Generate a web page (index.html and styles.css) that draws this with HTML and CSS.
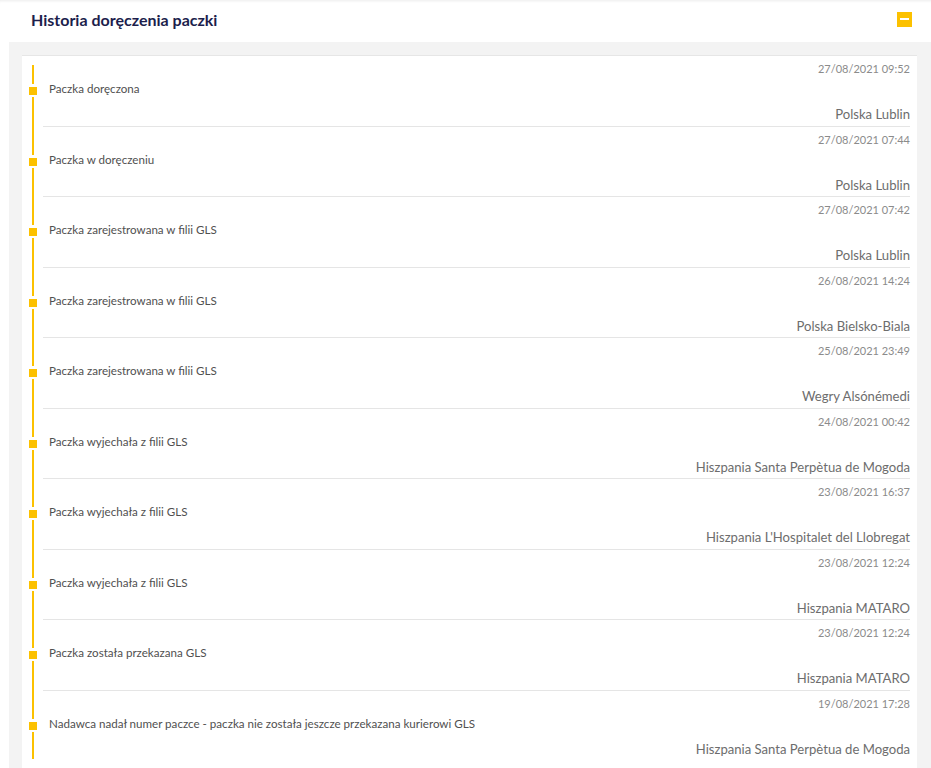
FILE: index.html
```html
<!DOCTYPE html>
<html lang="pl">
<head>
<meta charset="utf-8">
<title>Historia doręczenia paczki</title>
<link rel="stylesheet" href="styles.css">
</head>
<body>
<div class="panel">
  <div class="panel-head">
    <h2 class="panel-title">Historia doręczenia paczki</h2>
    <button class="toggle" aria-label="Zwiń"><span class="toggle-dash"></span></button>
  </div>
  <div class="panel-body">
    <div class="card">
      <div class="row first">
        <div class="track"><span class="seg seg-top"></span><span class="dot"></span><span class="seg seg-bottom"></span></div>
        <div class="info"><div class="date">27/08/2021 09:52</div><div class="desc">Paczka doręczona</div><div class="place">Polska Lublin</div></div>
      </div>
      <div class="row">
        <div class="track"><span class="seg seg-top"></span><span class="dot"></span><span class="seg seg-bottom"></span></div>
        <div class="info"><div class="date">27/08/2021 07:44</div><div class="desc">Paczka w doręczeniu</div><div class="place">Polska Lublin</div></div>
      </div>
      <div class="row">
        <div class="track"><span class="seg seg-top"></span><span class="dot"></span><span class="seg seg-bottom"></span></div>
        <div class="info"><div class="date">27/08/2021 07:42</div><div class="desc">Paczka zarejestrowana w filii GLS</div><div class="place">Polska Lublin</div></div>
      </div>
      <div class="row">
        <div class="track"><span class="seg seg-top"></span><span class="dot"></span><span class="seg seg-bottom"></span></div>
        <div class="info"><div class="date">26/08/2021 14:24</div><div class="desc">Paczka zarejestrowana w filii GLS</div><div class="place">Polska Bielsko-Biala</div></div>
      </div>
      <div class="row">
        <div class="track"><span class="seg seg-top"></span><span class="dot"></span><span class="seg seg-bottom"></span></div>
        <div class="info"><div class="date">25/08/2021 23:49</div><div class="desc">Paczka zarejestrowana w filii GLS</div><div class="place">Wegry Alsónémedi</div></div>
      </div>
      <div class="row">
        <div class="track"><span class="seg seg-top"></span><span class="dot"></span><span class="seg seg-bottom"></span></div>
        <div class="info"><div class="date">24/08/2021 00:42</div><div class="desc">Paczka wyjechała z filii GLS</div><div class="place">Hiszpania Santa Perpètua de Mogoda</div></div>
      </div>
      <div class="row">
        <div class="track"><span class="seg seg-top"></span><span class="dot"></span><span class="seg seg-bottom"></span></div>
        <div class="info"><div class="date">23/08/2021 16:37</div><div class="desc">Paczka wyjechała z filii GLS</div><div class="place">Hiszpania L'Hospitalet del Llobregat</div></div>
      </div>
      <div class="row">
        <div class="track"><span class="seg seg-top"></span><span class="dot"></span><span class="seg seg-bottom"></span></div>
        <div class="info"><div class="date">23/08/2021 12:24</div><div class="desc">Paczka wyjechała z filii GLS</div><div class="place">Hiszpania MATARO</div></div>
      </div>
      <div class="row">
        <div class="track"><span class="seg seg-top"></span><span class="dot"></span><span class="seg seg-bottom"></span></div>
        <div class="info"><div class="date">23/08/2021 12:24</div><div class="desc">Paczka została przekazana GLS</div><div class="place">Hiszpania MATARO</div></div>
      </div>
      <div class="row last">
        <div class="track"><span class="seg seg-top"></span><span class="dot"></span><span class="seg seg-bottom"></span></div>
        <div class="info"><div class="date">19/08/2021 17:28</div><div class="desc">Nadawca nadał numer paczce - paczka nie została jeszcze przekazana kurierowi GLS</div><div class="place">Hiszpania Santa Perpètua de Mogoda</div></div>
      </div>
    </div>
  </div>
</div>
</body>
</html>
```
FILE: styles.css
```css
html, body {
  margin: 0;
  padding: 0;
  background: #ffffff;
}
body {
  font-family: Lato, "Noto Sans", "Liberation Sans", sans-serif;
  overflow: hidden;
}
.panel {
  box-shadow: inset 0 3px 3px -2px rgba(0,0,0,0.08);
}
.panel-head {
  height: 42px;
  display: flex;
  align-items: center;
  justify-content: space-between;
  padding: 0 19px 0 31px;
}
.panel-title {
  margin: 0 0 3px;
  font-size: 16px;
  font-weight: 700;
  color: #1c1e4c;
  line-height: 20px;
}
.toggle {
  width: 15px;
  height: 15px;
  border: none;
  padding: 0;
  background: #fcc100;
  display: flex;
  align-items: center;
  justify-content: center;
  margin-top: -4px;
}
.toggle-dash {
  width: 9px;
  height: 2px;
  background: #ffffff;
}
.panel-body {
  margin-left: 9px;
  background: #f3f3f3;
  padding: 13px 14px 0 13px;
}
.card {
  background: #ffffff;
  border-top: 1px solid #e6e6e6;
  padding-right: 7px;
  padding-bottom: 20px;
}
.row {
  display: flex;
}
.track {
  width: 14px;
  flex: none;
  display: flex;
  flex-direction: column;
  align-items: flex-start;
  padding-left: 7px;
}
.seg {
  width: 2px;
  background: #fcc100;
  margin-left: 3px;
}
.seg-top {
  height: 28px;
  flex: none;
}
.first .seg-top {
  margin-top: 9px;
  height: 19px;
}
.dot {
  width: 8px;
  height: 8px;
  background: #fcc100;
  margin: 3px 0 2px;
  flex: none;
}
.seg-bottom {
  flex: 1;
}
.last .seg-bottom {
  margin-bottom: 2px;
}
.info {
  flex: 1;
  min-width: 0;
  border-bottom: 1px solid #e5e5e5;
  padding: 5px 0 3.5px 6px;
}
.last .info {
  border-bottom-color: transparent;
}
.date {
  text-align: right;
  font-size: 11px;
  line-height: 16px;
  color: #8b8b8b;
}
.desc {
  margin-top: 4px;
  font-size: 11.6px;
  line-height: 16px;
  color: #505050;
}
.place {
  margin-top: 9px;
  text-align: right;
  font-size: 13.1px;
  line-height: 16px;
  color: #6d6d6d;
}
```
